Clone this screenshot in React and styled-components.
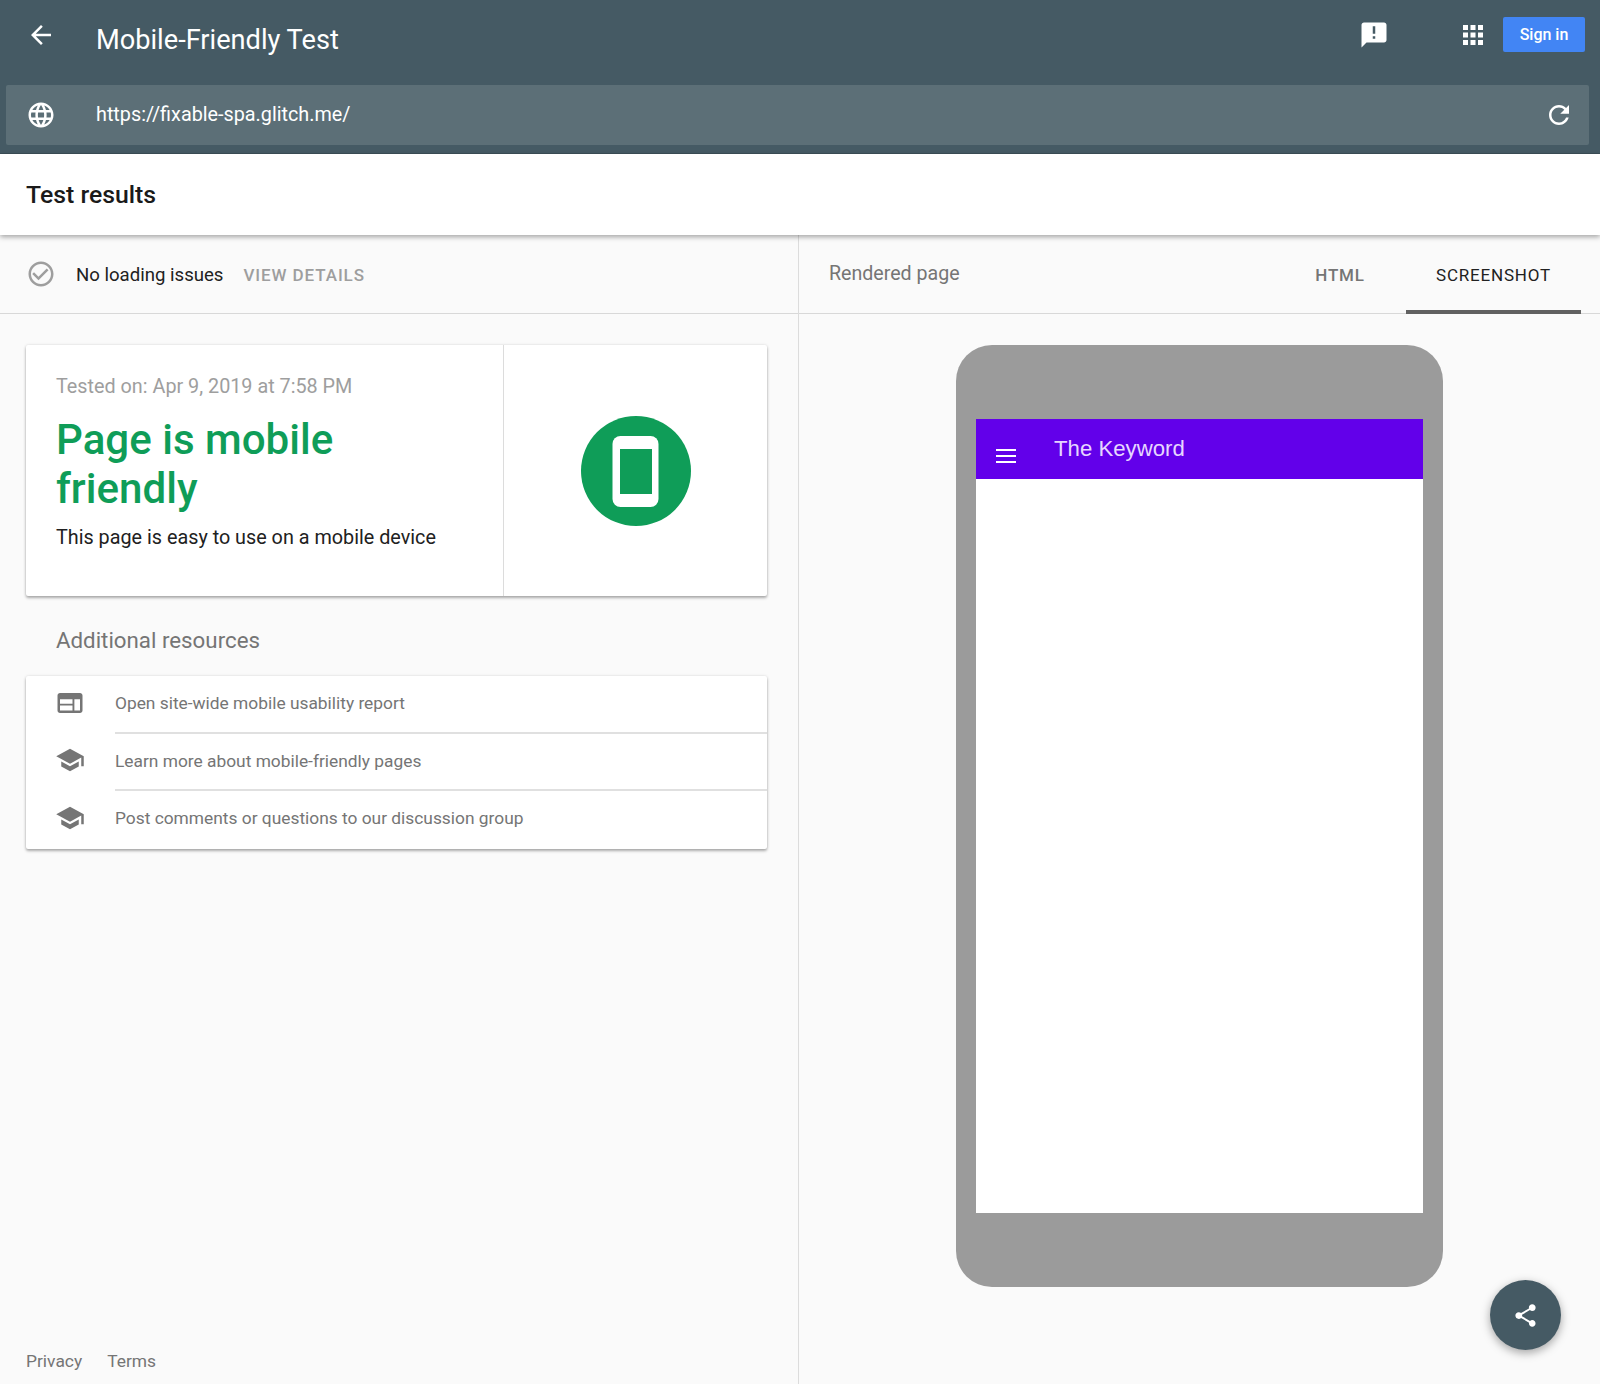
import React from "react";
import styled, { createGlobalStyle } from "styled-components";

const GlobalStyle = createGlobalStyle`
  html, body { margin: 0; padding: 0; background: #fafafa; }
  body { font-family: Roboto, "Liberation Sans", sans-serif; }
  * { box-sizing: border-box; }
`;

const Icon = ({ d, size = 30, color = "currentColor" }) => (
  <svg width={size} height={size} viewBox="0 0 24 24" fill={color} style={{ display: "block", flex: "none" }}>
    <path d={d} />
  </svg>
);

const paths = {
  back: "M20 11H7.83l5.59-5.59L12 4l-8 8 8 8 1.41-1.41L7.83 13H20v-2z",
  feedback: "M20 2H4c-1.1 0-1.99.9-1.99 2L2 22l4-4h14c1.1 0 2-.9 2-2V4c0-1.1-.9-2-2-2zm-7 9h-2V5h2v6zm0 4h-2v-2h2v2z",
  apps: "M4 8h4V4H4v4zm6 12h4v-4h-4v4zm-6 0h4v-4H4v4zm0-6h4v-4H4v4zm6 0h4v-4h-4v4zm6-10v4h4V4h-4zm-6 4h4V4h-4v4zm6 6h4v-4h-4v4zm0 6h4v-4h-4v4z",
  globe: "M11.99 2C6.47 2 2 6.48 2 12s4.47 10 9.99 10C17.52 22 22 17.52 22 12S17.52 2 11.99 2zm6.93 6h-2.95c-.32-1.25-.78-2.45-1.38-3.56 1.84.63 3.37 1.91 4.33 3.56zM12 4.04c.83 1.2 1.48 2.53 1.91 3.96h-3.82c.43-1.43 1.08-2.76 1.91-3.96zM4.26 14C4.1 13.36 4 12.69 4 12s.1-1.36.26-2h3.38c-.08.66-.14 1.32-.14 2 0 .68.06 1.34.14 2H4.26zm.82 2h2.95c.32 1.25.78 2.45 1.38 3.56-1.84-.63-3.37-1.9-4.33-3.56zm2.95-8H5.08c.96-1.66 2.49-2.93 4.33-3.56C8.81 5.55 8.35 6.75 8.03 8zM12 19.96c-.83-1.2-1.48-2.53-1.91-3.96h3.82c-.43 1.43-1.08 2.76-1.91 3.96zM14.34 14H9.66c-.09-.66-.16-1.32-.16-2 0-.68.07-1.35.16-2h4.68c.09.65.16 1.32.16 2 0 .68-.07 1.34-.16 2zm.25 5.56c.6-1.11 1.06-2.31 1.38-3.56h2.95c-.96 1.65-2.49 2.93-4.33 3.56zM16.36 14c.08-.66.14-1.32.14-2 0-.68-.06-1.34-.14-2h3.38c.16.64.26 1.31.26 2s-.1 1.36-.26 2h-3.38z",
  refresh: "M17.65 6.35C16.2 4.9 14.21 4 12 4c-4.42 0-7.99 3.58-7.99 8s3.57 8 7.99 8c3.73 0 6.84-2.55 7.73-6h-2.08c-.82 2.33-3.04 4-5.65 4-3.31 0-6-2.69-6-6s2.69-6 6-6c1.66 0 3.14.69 4.22 1.78L13 11h7V4l-2.35 2.35z",
  check: "M16.59 7.58L10 14.17l-3.59-3.58L5 12l5 5 8-8zM12 2C6.48 2 2 6.48 2 12s4.48 10 10 10 10-4.48 10-10S17.52 2 12 2zm0 18c-4.42 0-8-3.58-8-8s3.58-8 8-8 8 3.58 8 8-3.58 8-8 8z",
  web: "M20 4H4c-1.1 0-1.99.9-1.99 2L2 18c0 1.1.9 2 2 2h16c1.1 0 2-.9 2-2V6c0-1.1-.9-2-2-2zm-6 14H4v-4h10v4zm0-5.5H4V9h10v3.5zm6 5.5h-4.5V9H20v9z",
  school: "M5 13.18v4L12 21l7-3.82v-4L12 17l-7-3.82zM12 3L1 9l11 6 9-4.91V17h2V9L12 3z",
  share: "M18 16.08c-.76 0-1.44.3-1.96.77L8.91 12.7c.05-.23.09-.46.09-.7s-.04-.47-.09-.7l7.05-4.11c.54.5 1.25.81 2.04.81 1.66 0 3-1.34 3-3s-1.34-3-3-3-3 1.34-3 3c0 .24.04.47.09.7L8.04 9.81C7.5 9.31 6.79 9 6 9c-1.66 0-3 1.34-3 3s1.34 3 3 3c.79 0 1.5-.31 2.04-.81l7.12 4.16c-.05.21-.08.43-.08.65 0 1.61 1.31 2.92 2.92 2.92s2.92-1.31 2.92-2.92-1.31-2.92-2.92-2.92z",
};

const resources = [
  { icon: "web", label: "Open site-wide mobile usability report" },
  { icon: "school", label: "Learn more about mobile-friendly pages" },
  { icon: "school", label: "Post comments or questions to our discussion group" },
];

const App = () => (
  <Page>
    <GlobalStyle />
    <Header>
      <TopBar>
        <IconSlot>
          <Icon d={paths.back} />
        </IconSlot>
        <Title>Mobile-Friendly Test</Title>
        <Actions>
          <ActionIcon>
            <Icon d={paths.feedback} />
          </ActionIcon>
          <ActionIcon $apps>
            <Icon d={paths.apps} />
          </ActionIcon>
          <SignIn>Sign in</SignIn>
        </Actions>
      </TopBar>
      <UrlBar>
        <IconSlot>
          <Icon d={paths.globe} />
        </IconSlot>
        <Url>https://fixable-spa.glitch.me/</Url>
        <Icon d={paths.refresh} />
      </UrlBar>
    </Header>

    <ResultsBar>Test results</ResultsBar>

    <Columns>
      <LeftColumn>
        <StatusRow>
          <Icon d={paths.check} color="#9e9e9e" />
          <StatusText>No loading issues</StatusText>
          <DetailsLink>VIEW DETAILS</DetailsLink>
        </StatusRow>
        <LeftBody>
          <VerdictCard>
            <VerdictInfo>
              <TestedOn>Tested on: Apr 9, 2019 at 7:58 PM</TestedOn>
              <Verdict>Page is mobile friendly</Verdict>
              <VerdictNote>This page is easy to use on a mobile device</VerdictNote>
            </VerdictInfo>
            <VerdictBadge>
              <svg width="110" height="110" viewBox="0 0 110 110">
                <circle cx="55" cy="55" r="55" fill="#0f9d58" />
                <rect x="31.5" y="20" width="46" height="71" rx="8" fill="#fff" />
                <rect x="39" y="33" width="32" height="45" fill="#0f9d58" />
              </svg>
            </VerdictBadge>
          </VerdictCard>
          <ResourcesTitle>Additional resources</ResourcesTitle>
          <ResourcesCard>
            {resources.map((item) => (
              <ResourceRow key={item.label}>
                <ResourceIcon>
                  <Icon d={paths[item.icon]} color="#757575" />
                </ResourceIcon>
                <ResourceLabel>{item.label}</ResourceLabel>
              </ResourceRow>
            ))}
          </ResourcesCard>
          <Footer>
            <FooterLink>Privacy</FooterLink>
            <FooterLink>Terms</FooterLink>
          </Footer>
        </LeftBody>
      </LeftColumn>

      <RightColumn>
        <TabsRow>
          <RenderedLabel>Rendered page</RenderedLabel>
          <Tab>HTML</Tab>
          <Tab $active>SCREENSHOT</Tab>
        </TabsRow>
        <PhoneArea>
          <Phone>
            <PhoneScreen>
              <PhoneBar>
                <Hamburger>
                  <span />
                  <span />
                  <span />
                </Hamburger>
                <PhoneTitle>The Keyword</PhoneTitle>
              </PhoneBar>
            </PhoneScreen>
          </Phone>
        </PhoneArea>
      </RightColumn>
    </Columns>

    <ShareButton>
      <Icon d={paths.share} size={27} color="#fff" />
    </ShareButton>
  </Page>
);

export default App;

const Page = styled.div`
  position: relative;
  width: 1600px;
  height: 1384px;
  overflow: hidden;
  display: flex;
  flex-direction: column;
  background: #fafafa;
`;

const Header = styled.header`
  height: 154px;
  flex: none;
  background: #455a64;
  color: #fff;
  padding: 0 11px 9px 6px;
  border-bottom: 1px solid #3c4f58;
  display: flex;
  flex-direction: column;
`;

const TopBar = styled.div`
  height: 85px;
  flex: none;
  display: flex;
  align-items: flex-start;
`;

const IconSlot = styled.div`
  width: 70px;
  height: 30px;
  padding-left: 20px;
  flex: none;
  margin-top: 20px;
`;

const Title = styled.h1`
  margin: 24px 0 0 20px;
  font-size: 27.2px;
  line-height: 32px;
  font-weight: 400;
  color: #fff;
`;

const Actions = styled.div`
  margin-left: auto;
  margin-top: 17px;
  padding-right: 4px;
  display: flex;
  align-items: flex-start;
`;

const ActionIcon = styled.div`
  margin: 3px ${(p) => (p.$apps ? "15px" : "0")} 0 ${(p) => (p.$apps ? "69px" : "0")};
`;

const SignIn = styled.button`
  width: 82px;
  height: 35px;
  border: 0;
  border-radius: 2px;
  background: #4285f4;
  color: #fff;
  font: 500 16px Roboto, sans-serif;
`;

const UrlBar = styled.div`
  height: 60px;
  flex: none;
  display: flex;
  align-items: center;
  padding-right: 15px;
  background: #5c6f77;
  border-radius: 2px;

  ${IconSlot} {
    margin-top: 0;
  }
`;

const Url = styled.div`
  flex: 1;
  margin-left: 20px;
  padding-bottom: 2px;
  font-size: 19.8px;
  color: #fff;
`;

const ResultsBar = styled.div`
  position: relative;
  z-index: 2;
  height: 81px;
  flex: none;
  display: flex;
  align-items: center;
  padding-left: 26px;
  background: #fff;
  font-size: 24.8px;
  font-weight: 500;
  color: #1a1a1a;
  box-shadow: 0 2px 5px rgba(0, 0, 0, 0.35);
`;

const Columns = styled.div`
  flex: 1;
  min-height: 0;
  display: grid;
  grid-template-columns: 799px 801px;
`;

const LeftColumn = styled.section`
  display: flex;
  flex-direction: column;
  border-right: 1px solid #dcdcdc;
`;

const StatusRow = styled.div`
  height: 79px;
  flex: none;
  display: flex;
  align-items: center;
  padding: 2px 0 0 26px;
  border-bottom: 1px solid #d8d8d8;

  svg {
    margin-top: -2px;
  }
`;

const StatusText = styled.span`
  margin-left: 20px;
  font-size: 18.6px;
  color: #212121;
`;

const DetailsLink = styled.span`
  margin-left: 20px;
  font-size: 17px;
  font-weight: 500;
  letter-spacing: 0.9px;
  color: #9e9e9e;
`;

const LeftBody = styled.div`
  flex: 1;
  display: flex;
  flex-direction: column;
  padding: 31px 31px 0 26px;
`;

const VerdictCard = styled.div`
  height: 251px;
  flex: none;
  display: flex;
  background: #fff;
  border-radius: 2px;
  box-shadow: 0 2px 3px rgba(0, 0, 0, 0.3), 0 0 3px rgba(0, 0, 0, 0.12);
`;

const VerdictInfo = styled.div`
  width: 478px;
  flex: none;
  padding: 30px 20px 0 30px;
  border-right: 1px solid #dcdcdc;
`;

const TestedOn = styled.div`
  font-size: 19.8px;
  line-height: 24px;
  color: #9e9e9e;
`;

const Verdict = styled.h2`
  margin: 16px 0 0;
  font-size: 42.1px;
  line-height: 49px;
  font-weight: 500;
  color: #0f9d58;
`;

const VerdictNote = styled.div`
  margin-top: 13px;
  font-size: 19.8px;
  line-height: 24px;
  color: #212121;
`;

const VerdictBadge = styled.div`
  flex: 1;
  display: flex;
  align-items: center;
  justify-content: center;
`;

const ResourcesTitle = styled.h3`
  margin: 30px 0 0 30px;
  font-size: 22.3px;
  line-height: 28px;
  font-weight: 400;
  color: #757575;
`;

const ResourcesCard = styled.div`
  margin-top: 22px;
  flex: none;
  background: #fff;
  border-radius: 2px;
  box-shadow: 0 2px 3px rgba(0, 0, 0, 0.3), 0 0 3px rgba(0, 0, 0, 0.12);
`;

const ResourceRow = styled.div`
  height: 57.5px;
  display: grid;
  grid-template-columns: 89px 1fr;
  align-items: stretch;
`;

const ResourceIcon = styled.div`
  display: flex;
  align-items: center;
  padding: 0 0 4px 29px;
`;

const ResourceLabel = styled.div`
  display: flex;
  align-items: center;
  padding-bottom: 1px;
  font-size: 17.35px;
  color: #757575;
  border-bottom: 2px solid #e0e0e0;

  ${ResourceRow}:last-child & {
    border-bottom: 0;
    padding-bottom: 3px;
  }
`;

const Footer = styled.footer`
  margin-top: auto;
  margin-bottom: 12px;
  display: flex;
  gap: 25px;
`;

const FooterLink = styled.span`
  font-size: 17.4px;
  line-height: 22px;
  color: #757575;
`;

const RightColumn = styled.section`
  display: flex;
  flex-direction: column;
`;

const TabsRow = styled.div`
  height: 79px;
  flex: none;
  display: flex;
  align-items: stretch;
  padding: 0 19px 0 30px;
  border-bottom: 1px solid #d8d8d8;
`;

const RenderedLabel = styled.div`
  flex: 1;
  display: flex;
  align-items: center;
  padding-bottom: 2px;
  font-size: 19.6px;
  color: #757575;
`;

const Tab = styled.div`
  display: flex;
  align-items: center;
  justify-content: center;
  margin-bottom: -1px;
  padding-top: 4px;
  width: ${(p) => (p.$active ? "175px" : "132px")};
  font-size: 17px;
  font-weight: ${(p) => (p.$active ? 400 : 500)};
  letter-spacing: 0.8px;
  color: ${(p) => (p.$active ? "#212121" : "#757575")};
  border-bottom: 4px solid ${(p) => (p.$active ? "#616161" : "transparent")};
`;

const PhoneArea = styled.div`
  flex: 1;
  display: flex;
  justify-content: center;
  padding-top: 31px;
`;

const Phone = styled.div`
  width: 487px;
  height: 942px;
  padding: 74px 20px 0;
  border-radius: 36px;
  background: #9b9b9b;
`;

const PhoneScreen = styled.div`
  height: 794px;
  background: #fff;
`;

const PhoneBar = styled.div`
  position: relative;
  height: 60px;
  display: flex;
  align-items: center;
  padding-left: 78px;
  background: #6200ea;
`;

const Hamburger = styled.div`
  position: absolute;
  left: 20px;
  top: 30px;
  width: 20px;
  display: grid;
  gap: 4px;

  span {
    display: block;
    height: 2px;
    background: #fff;
  }
`;

const PhoneTitle = styled.div`
  font: 22.2px "Liberation Sans", Arial, sans-serif;
  color: #e6d6ff;
`;

const ShareButton = styled.div`
  position: absolute;
  left: 1490px;
  top: 1280px;
  width: 71px;
  height: 70px;
  display: flex;
  align-items: center;
  justify-content: center;
  border-radius: 50%;
  background: #455a64;
  box-shadow: 0 3px 10px rgba(0, 0, 0, 0.35);
`;
